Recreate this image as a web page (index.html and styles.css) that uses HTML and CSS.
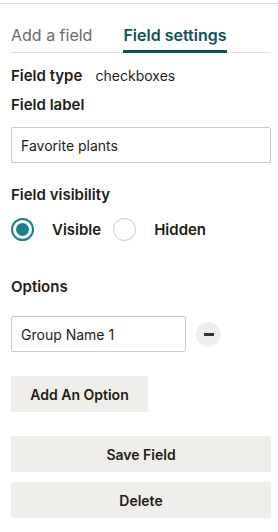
FILE: index.html
```html
<!DOCTYPE html>
<html lang="en">
<head>
  <meta charset="UTF-8" />
  <meta name="viewport" content="width=device-width, initial-scale=1.0"/>
  <title>Field settings</title>
  <link rel="stylesheet" href="styles.css">
</head>
<body>
  <div class="painel">
    <nav class="abas">
      <a href="#" class="aba">Add a field</a>
      <a href="#" class="aba ativa">Field settings</a>
    </nav>

    <div class="conteudo">
      <p class="linha-tipo"><strong>Field type</strong> <span>checkboxes</span></p>

      <label class="rotulo" for="label">Field label</label>
      <input id="label" class="campo" type="text" value="Favorite plants">

      <p class="rotulo secao">Field visibility</p>
      <div class="radios">
        <label class="radio">
          <span class="bolinha marcada"></span>
          Visible
        </label>
        <label class="radio">
          <span class="bolinha"></span>
          Hidden
        </label>
      </div>

      <p class="rotulo opcoes">Options</p>
      <div class="opcao">
        <input class="campo curto" type="text" value="Group Name 1">
        <button class="remover" aria-label="Remove"><span></span></button>
      </div>

      <button class="botao pequeno">Add An Option</button>

      <div class="acoes">
        <button class="botao">Save Field</button>
        <button class="botao">Delete</button>
      </div>
    </div>
  </div>
</body>
</html>
```

FILE: styles.css
```css
:root {
  --cor-primaria: #0f5257;
  --cor-radio: #1a7f8a;
  --texto: #241c15;
  --texto-suave: #6b6b6b;
  --borda: #c8c8c8;
  --linha: #dedddc;
  --fundo-botao: #efeeea;
}

* {
  margin: 0;
  padding: 0;
  box-sizing: border-box;
}

body {
  font-family: 'Inter', 'Liberation Sans', sans-serif;
  background-color: #fff;
  color: var(--texto);
  font-size: 15px;
}

.painel {
  border-top: 1px solid var(--linha);
  margin-top: 3px;
}

.abas {
  display: flex;
  gap: 31px;
  margin: 0 7px 0 11px;
  padding-top: 21px;
  border-bottom: 1px solid var(--linha);
}

.aba {
  font-size: 16px;
  line-height: 20px;
  padding-bottom: 5px;
  text-decoration: none;
  color: var(--texto-suave);
  border-bottom: 3px solid transparent;
  margin-bottom: -1px;
}

.aba.ativa {
  color: var(--cor-primaria);
  font-weight: 600;
  border-bottom-color: var(--cor-primaria);
}

.conteudo {
  padding: 13px 7px 0 11px;
}

.linha-tipo {
  line-height: 20px;
}

.linha-tipo strong {
  font-weight: 600;
  margin-right: 9px;
}

.linha-tipo span {
  font-size: 14px;
}

.rotulo {
  display: block;
  font-weight: 600;
  line-height: 20px;
  margin-top: 9px;
}

.campo {
  display: block;
  width: 100%;
  height: 36px;
  margin-top: 12px;
  padding: 0 9px;
  font-family: inherit;
  font-size: 14px;
  color: var(--texto);
  border: 1px solid var(--borda);
  border-radius: 2px;
  background-color: #fff;
}

.secao {
  margin-top: 22px;
}

.radios {
  display: flex;
  align-items: center;
  margin-top: 13px;
}

.radio {
  display: flex;
  align-items: center;
  gap: 18px;
  font-weight: 600;
  margin-right: 12px;
}

.bolinha {
  width: 23px;
  height: 23px;
  border-radius: 50%;
  border: 1px solid var(--borda);
  display: flex;
  align-items: center;
  justify-content: center;
}

.bolinha.marcada {
  border: 2px solid var(--cor-radio);
}

.bolinha.marcada::after {
  content: "";
  width: 13px;
  height: 13px;
  border-radius: 50%;
  background-color: var(--cor-radio);
}

.opcoes {
  margin-top: 36px;
}

.opcao {
  display: flex;
  align-items: center;
  gap: 10px;
  margin-top: 19px;
}

.campo.curto {
  width: 175px;
  margin-top: 0;
}

.remover {
  width: 25px;
  height: 25px;
  border: none;
  border-radius: 50%;
  background-color: var(--fundo-botao);
  display: flex;
  align-items: center;
  justify-content: center;
}

.remover span {
  width: 10px;
  height: 3px;
  background-color: #333;
}

.botao {
  display: block;
  width: 100%;
  height: 36px;
  border: none;
  border-radius: 2px;
  background-color: var(--fundo-botao);
  font-family: inherit;
  font-size: 14px;
  font-weight: 600;
  color: var(--texto);
}

.botao.pequeno {
  width: 137px;
  margin-top: 24px;
}

.acoes {
  display: flex;
  flex-direction: column;
  gap: 10px;
  margin-top: 24px;
}
```
